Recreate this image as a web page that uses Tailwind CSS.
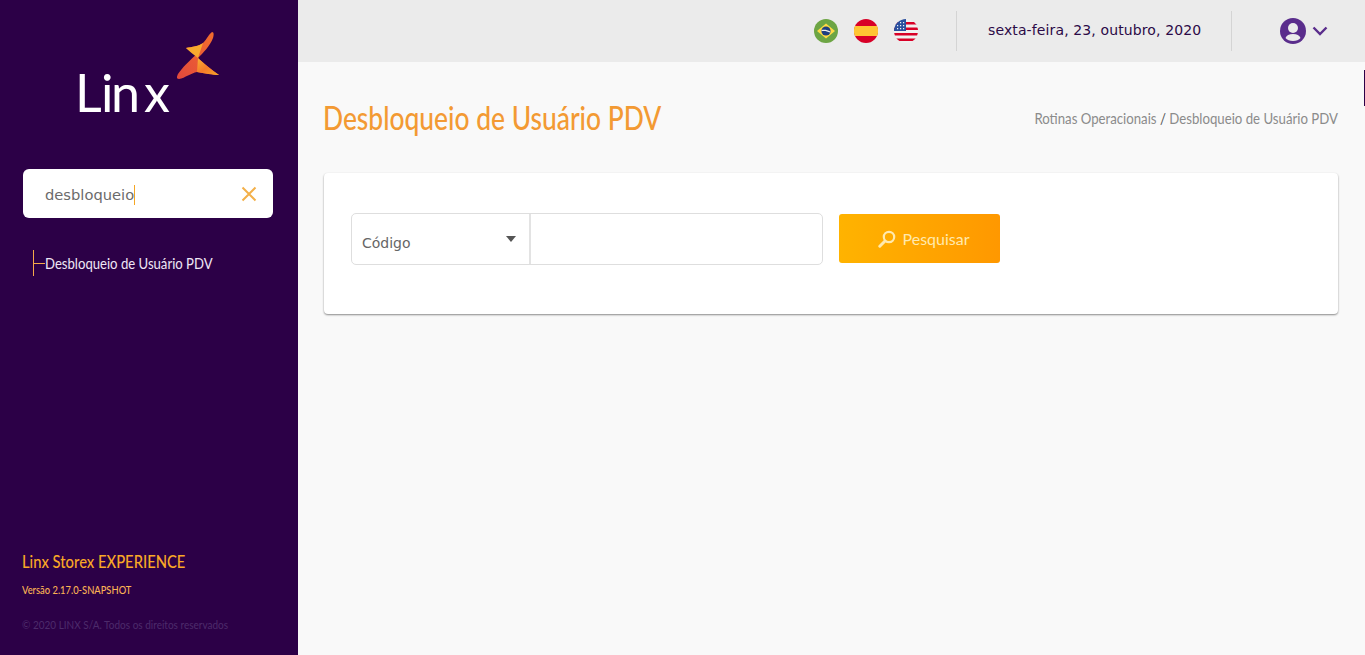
<!DOCTYPE html>
<html lang="pt-BR">
<head>
  <meta charset="UTF-8">
  <meta name="viewport" content="width=device-width, initial-scale=1.0">
  <title>Desbloqueio de Usuário PDV</title>
  <script src="https://cdn.jsdelivr.net/npm/@tailwindcss/browser@4"></script>
</head>
<body class="bg-[#f9f9f9] font-['Lato',sans-serif] overflow-hidden">
  <div class="relative flex h-[655px] w-[1365px]">
    <!-- menu lateral -->
    <aside class="flex h-full w-[298px] shrink-0 flex-col bg-[#2c0047]">
      <svg class="h-[169px] w-[298px] shrink-0" viewBox="0 0 298 169">
        <defs>
          <linearGradient id="braco" x1="0" y1="0" x2="1" y2="1">
            <stop offset="0" stop-color="#f9b233"/>
            <stop offset="0.5" stop-color="#f47b2a"/>
            <stop offset="1" stop-color="#f4a62a"/>
          </linearGradient>
          <linearGradient id="base" x1="0" y1="1" x2="1" y2="0">
            <stop offset="0" stop-color="#e2483c"/>
            <stop offset="1" stop-color="#f2702c"/>
          </linearGradient>
        </defs>
        <text x="75 101 111 144" y="112" fill="#fff" font-size="52" font-family="Lato, sans-serif">Linx</text>
        <path d="M186 48 C192 47 199 46 203 43 C207 39 209 34 212 32 C214 32 214 35 213 38 C210 46 203 53 198 58 C203 63 212 70 219 75 C213 75 204 73 197 72 C191 73 185 78 179 79 C176 79 177 76 178 74 C182 68 190 60 197 54 C193 52 189 51 186 48 Z" fill="url(#base)"/>
        <path d="M186 48 C192 47 199 46 203 43 L198 58 C193 54 189 51 186 48 Z" fill="#f7a92e"/>
        <path d="M198 58 C203 63 212 70 219 75 C213 75 204 73 197 72 Z" fill="url(#braco)"/>
      </svg>

      <div class="mx-[23px] flex h-[49px] w-[250px] shrink-0 items-center justify-between rounded-[6px] bg-white pl-[22px] pr-[16px]">
        <span class="translate-y-px border-r border-[#f5a623] font-['DejaVu_Sans',sans-serif] text-[14.700px] leading-[20px] text-[#6b6b6b]">desbloqueio</span>
        <svg class="h-[16px] w-[16px]" viewBox="0 0 16 16" fill="none" stroke="#f3b04a" stroke-width="2"><path d="M1.500 1.500 14.500 14.500M14.500 1.500 1.500 14.500"/></svg>
      </div>

      <div class="ml-[33px] mt-[32px] flex h-[26px] items-center border-l border-[#f5a94a]">
        <span class="h-px w-[11px] bg-[#f5a94a]"></span>
        <span class="origin-left scale-x-[0.82] whitespace-nowrap text-[16px] leading-[20px] text-[#efe6f5]">Desbloqueio de Usuário PDV</span>
      </div>

      <div class="mt-auto flex flex-col items-start px-[22px] pb-[22px]">
        <span class="origin-left scale-x-[0.82] whitespace-nowrap text-[18px] font-medium leading-[22px] text-[#f9a826]">Linx Storex EXPERIENCE</span>
        <span class="mt-[10px] origin-left scale-x-[0.78] whitespace-nowrap text-[12px] font-medium leading-[16px] text-[#fbb454]">Versão 2.17.0-SNAPSHOT</span>
        <span class="mt-[19px] origin-left scale-x-[0.834] whitespace-nowrap text-[12px] leading-[16px] text-[#4d2b6b]">© 2020 LINX S/A. Todos os direitos reservados</span>
      </div>
    </aside>

    <div class="flex min-w-0 flex-1 flex-col">
      <!-- topo -->
      <header class="flex h-[62px] shrink-0 items-center bg-[#ebebeb]">
        <div class="ml-[516px] flex gap-[16px]">
          <svg class="h-[24px] w-[24px]" viewBox="0 0 24 24">
            <circle cx="12" cy="12" r="12" fill="#6da544"/>
            <path d="M12 4.500 21 12 12 19.500 3 12Z" fill="#ffda44"/>
            <circle cx="12" cy="12" r="4.600" fill="#1f3f80"/>
            <path d="M7.600 11c3-.6 6-.1 8.700 1.600l-.4 1C13 12 10.300 11.600 7.500 12.200Z" fill="#f0f0f0"/>
          </svg>
          <svg class="h-[24px] w-[24px]" viewBox="0 0 24 24">
            <circle cx="12" cy="12" r="12" fill="#d80027"/>
            <path d="M1 7H23A12 12 0 0 1 23 17H1A12 12 0 0 1 1 7Z" fill="#ffc533"/>
          </svg>
          <svg class="h-[24px] w-[24px]" viewBox="0 0 24 24">
            <clipPath id="disco"><circle cx="12" cy="12" r="12"/></clipPath>
            <g clip-path="url(#disco)">
              <rect width="24" height="24" fill="#f0f0f0"/>
              <path d="M0 3H24V5.500H0ZM0 8.500H24V11H0ZM0 14H24V16.500H0ZM0 19.500H24V22H0Z" fill="#d80027"/>
              <rect width="12" height="12" fill="#2a4f9e"/>
              <path d="M3 6h1.200v1.200H3ZM6 3h1.200v1.200H6ZM6 6h1.200v1.200H6ZM9 3h1.200v1.200H9ZM9 6h1.200v1.200H9ZM9 9h1.200v1.200H9ZM6 9h1.200v1.200H6ZM3 9h1.200v1.200H3Z" fill="#f0f0f0"/>
            </g>
          </svg>
        </div>
        <span class="ml-[38px] h-[40px] w-px bg-[#d4d4d4]"></span>
        <span class="ml-[31px] w-[214px] -translate-y-px whitespace-nowrap font-['DejaVu_Sans',sans-serif] text-[14px] leading-[18px] tracking-[0.12px] text-[#2c0a47]">sexta-feira, 23, outubro, 2020</span>
        <span class="ml-[29px] h-[40px] w-px bg-[#d4d4d4]"></span>
        <svg class="ml-[48px] h-[26px] w-[26px]" viewBox="0 0 26 26">
          <circle cx="13" cy="13" r="13" fill="#5a2d8c"/>
          <circle cx="13" cy="10" r="5" fill="#ebebeb"/>
          <path d="M5.500 20C6.500 17.200 9 16 13 16S19.500 17.200 20.500 20C19 22 16.200 23 13 23S7 22 5.500 20Z" fill="#ebebeb"/>
        </svg>
        <svg class="ml-[6px] h-[10px] w-[16px]" viewBox="0 0 16 10" fill="none" stroke="#5a2d8c" stroke-width="2.400"><path d="M1.500 1.500 8 8l6.500-6.500"/></svg>
      </header>

      <main class="flex flex-col pl-[26px] pr-[27px]">
        <div class="flex h-[111px] items-center justify-between">
          <h1 class="-ml-px origin-left scale-x-[0.825] whitespace-nowrap text-[32px] font-medium leading-[40px] text-[#f39a33]">Desbloqueio de Usuário PDV</h1>
          <p class="origin-right scale-x-[0.825] whitespace-nowrap text-[16px] leading-[20px] text-[#8b8b8b]">Rotinas Operacionais <span class="text-[#555]">/</span> Desbloqueio de Usuário PDV</p>
        </div>

        <section class="flex h-[141px] items-start gap-[16px] rounded-[4px] bg-white pl-[27px] pt-[40px] shadow-[0_1px_2px_rgba(0,0,0,0.45)]">
          <div class="flex h-[52px] w-[472px] rounded-[5px] border border-[#dedede]">
            <div class="relative flex w-[179px] items-center border-r-2 border-[#e3e3e3] pl-[10px] pt-[9px] font-['DejaVu_Sans',sans-serif] text-[14px] text-[#666]">
              Código
              <span class="absolute right-[13px] top-[22px] h-0 w-0 border-x-[5px] border-t-[6px] border-x-transparent border-t-[#555]"></span>
            </div>
            <div class="flex-1"></div>
          </div>
          <button class="mt-px flex h-[49px] w-[161px] items-center justify-center gap-[7px] rounded-[3px] bg-gradient-to-r from-[#ffb300] to-[#ff9800] pl-[8px] text-[16px] text-[#ffe9ae]">
            <svg class="h-[18px] w-[18px]" viewBox="0 0 18 18" fill="none" stroke="#ffe9ae"><circle cx="11" cy="7" r="5.200" stroke-width="2.200"/><path d="M7 11 1.800 16.200" stroke-width="3" stroke-linecap="round"/></svg>
            Pesquisar
          </button>
        </section>
      </main>
    </div>

    <!-- aba na borda direita -->
    <span class="absolute right-0 top-[70px] h-[36px] w-px bg-[#2c0047]"></span>
  </div>
</body>
</html>
